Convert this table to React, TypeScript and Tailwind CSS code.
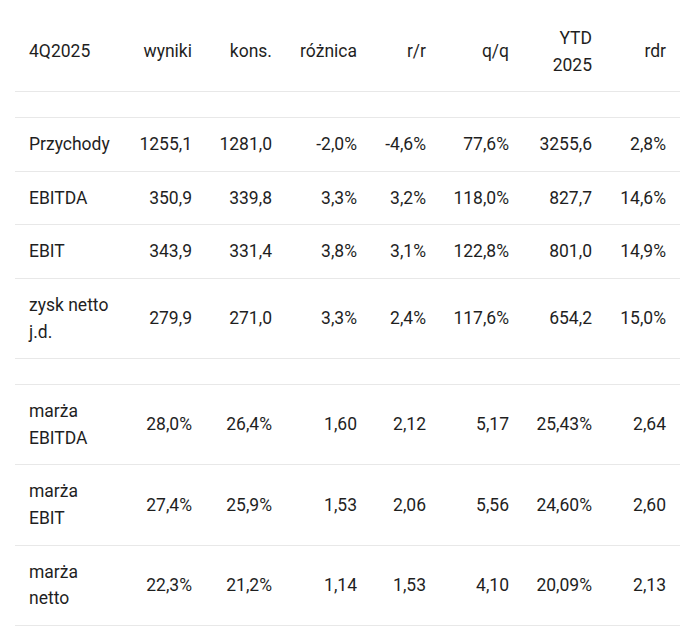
const header = ["4Q2025", "wyniki", "kons.", "różnica", "r/r", "q/q", "YTD 2025", "rdr"]

type Row = string[] | null

const rows: Row[] = [
  null,
  ["Przychody", "1255,1", "1281,0", "-2,0%", "-4,6%", "77,6%", "3255,6", "2,8%"],
  ["EBITDA", "350,9", "339,8", "3,3%", "3,2%", "118,0%", "827,7", "14,6%"],
  ["EBIT", "343,9", "331,4", "3,8%", "3,1%", "122,8%", "801,0", "14,9%"],
  ["zysk netto j.d.", "279,9", "271,0", "3,3%", "2,4%", "117,6%", "654,2", "15,0%"],
  null,
  ["marża EBITDA", "28,0%", "26,4%", "1,60", "2,12", "5,17", "25,43%", "2,64"],
  ["marża EBIT", "27,4%", "25,9%", "1,53", "2,06", "5,56", "24,60%", "2,60"],
  ["marża netto", "22,3%", "21,2%", "1,14", "1,53", "4,10", "20,09%", "2,13"],
]

const widths = [113, 78, 80, 85, 69, 83, 83, 74]

export default function App() {
  return (
    <div className="w-[680px] h-[637px] bg-white overflow-hidden font-['Roboto',sans-serif] text-[17.5px] leading-[26.6px] text-[#1f1f1f]">
      <table className="ml-[15px] w-[665px] table-fixed border-collapse">
        <colgroup>
          {widths.map((w, i) => (
            <col key={i} style={{ width: w }} />
          ))}
        </colgroup>
        <thead>
          <tr className="border-b border-[#e8e8e8]">
            {header.map((h, i) => (
              <th
                key={h}
                className={
                  i === 0
                    ? "pt-[25px] pb-[13px] pl-[14px] pr-[14px] text-left font-normal align-middle"
                    : "pt-[25px] pb-[13px] pl-0 pr-[14px] text-right font-normal align-middle"
                }
              >
                {h}
              </th>
            ))}
          </tr>
        </thead>
        <tbody>
          {rows.map((r, ri) =>
            r === null ? (
              <tr key={ri} className="border-b border-[#e8e8e8]">
                <td colSpan={8} className="h-[26px] p-0" />
              </tr>
            ) : (
              <tr key={ri} className="border-b border-[#e8e8e8]">
                {r.map((c, i) => (
                  <td
                    key={i}
                    className={
                      i === 0
                        ? "py-[13px] pl-[14px] pr-[14px] text-left align-middle"
                        : "py-[13px] pl-0 pr-[14px] text-right align-middle whitespace-nowrap"
                    }
                  >
                    {c}
                  </td>
                ))}
              </tr>
            )
          )}
        </tbody>
      </table>
    </div>
  )
}
